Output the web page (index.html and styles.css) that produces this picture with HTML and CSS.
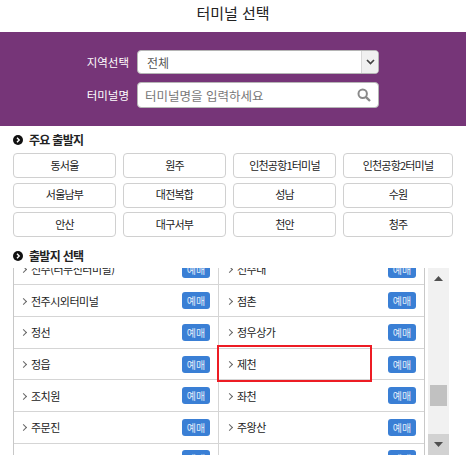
FILE: index.html
```html
<!DOCTYPE html>
<html lang="ko">
<head>
<meta charset="utf-8">
<title>터미널 선택</title>
<link rel="stylesheet" href="styles.css">
</head>
<body>
<h1 class="title">터미널 선택</h1>
<section class="panel">
  <div class="form-row">
    <label class="form-label">지역선택</label>
    <div class="field field-select">
      <span class="field-value">전체</span>
      <span class="select-arrow"><svg width="9" height="6" viewBox="0 0 9 6"><path d="M1 1l3.5 3.5L8 1" fill="none" stroke="#444" stroke-width="1.7"/></svg></span>
    </div>
  </div>
  <div class="form-row">
    <label class="form-label">터미널명</label>
    <div class="field field-input">
      <span class="placeholder">터미널명을 입력하세요</span>
      <svg class="search" width="14" height="14" viewBox="0 0 14 14"><circle cx="5.7" cy="5.7" r="4.2" fill="none" stroke="#8a8a8a" stroke-width="2"/><path d="M8.8 8.8L13 13" stroke="#8a8a8a" stroke-width="2.4"/></svg>
    </div>
  </div>
</section>
<h2 class="heading heading-first"><svg class="bullet" width="10" height="10" viewBox="0 0 10 10"><circle cx="5" cy="5" r="5" fill="#111"/><path d="M4 2.8L6.2 5 4 7.2" fill="none" stroke="#fff" stroke-width="1.4"/></svg>주요 출발지</h2>
<div class="chips">
  <button class="chip">동서울</button><button class="chip">원주</button><button class="chip">인천공항1터미널</button><button class="chip">인천공항2터미널</button>
  <button class="chip">서울남부</button><button class="chip">대전복합</button><button class="chip">성남</button><button class="chip">수원</button>
  <button class="chip">안산</button><button class="chip">대구서부</button><button class="chip">천안</button><button class="chip">청주</button>
</div>
<h2 class="heading heading-second"><svg class="bullet" width="10" height="10" viewBox="0 0 10 10"><circle cx="5" cy="5" r="5" fill="#111"/><path d="M4 2.8L6.2 5 4 7.2" fill="none" stroke="#fff" stroke-width="1.4"/></svg>출발지 선택</h2>
<div class="list-wrap">
  <div class="list">
    <div class="rows">
      <div class="cell"><span class="name">전주(터부신터미널)</span><span class="tag">예매</span></div>
      <div class="cell"><span class="name">전주대</span><span class="tag">예매</span></div>
      <div class="cell"><span class="name">전주시외터미널</span><span class="tag">예매</span></div>
      <div class="cell"><span class="name">점촌</span><span class="tag">예매</span></div>
      <div class="cell"><span class="name">정선</span><span class="tag">예매</span></div>
      <div class="cell"><span class="name">정우상가</span><span class="tag">예매</span></div>
      <div class="cell"><span class="name">정읍</span><span class="tag">예매</span></div>
      <div class="cell"><span class="name">제천</span><span class="tag">예매</span></div>
      <div class="cell"><span class="name">조치원</span><span class="tag">예매</span></div>
      <div class="cell"><span class="name">좌천</span><span class="tag">예매</span></div>
      <div class="cell"><span class="name">주문진</span><span class="tag">예매</span></div>
      <div class="cell"><span class="name">주왕산</span><span class="tag">예매</span></div>
      <div class="cell"><span class="name"></span><span class="tag">예매</span></div>
      <div class="cell"><span class="name"></span><span class="tag">예매</span></div>
    </div>
    <div class="highlight"></div>
  </div>
  <div class="scrollbar">
    <div class="sb-btn"><svg width="9" height="5" viewBox="0 0 9 5"><path d="M4.5 0L9 5H0z" fill="#505050"/></svg></div>
    <div class="sb-track"><div class="sb-thumb"></div></div>
    <div class="sb-btn sb-btn-down"><svg width="9" height="5" viewBox="0 0 9 5"><path d="M0 0h9L4.5 5z" fill="#505050"/></svg></div>
  </div>
</div>
</body>
</html>
```
FILE: styles.css
```css
* { box-sizing: border-box; }
html, body { margin: 0; padding: 0; }
body {
  width: 466px;
  height: 464px;
  overflow: hidden;
  background: #fff;
  color: #222;
  font-family: "Noto Sans CJK KR", "Noto Sans", sans-serif;
  font-size: 12px;
}
.title {
  margin: 0;
  height: 32px;
  line-height: 26px;
  text-align: center;
  font-size: 15px;
  font-weight: 400;
}
.panel {
  height: 94px;
  padding-top: 18px;
  background: #763578;
  display: flex;
  flex-direction: column;
  gap: 8px;
}
.form-row { display: flex; align-items: center; }
.form-label {
  width: 129px;
  text-align: right;
  margin-right: 8px;
  color: #fff;
  font-size: 11.5px;
  line-height: 18px;
}
.field {
  width: 242px;
  background: #fff;
  border: 1px solid #b5b5b5;
  border-radius: 4px;
  display: flex;
  align-items: center;
  overflow: hidden;
}
.field-select { height: 24px; }
.field-input { height: 26px; padding-right: 7px; }
.field-value { flex: 1; padding-left: 9px; color: #555; font-size: 12px; }
.placeholder { flex: 1; padding-left: 7px; color: #777; font-size: 12.5px; }
.select-arrow {
  width: 17px;
  height: 100%;
  background: #f0f0f0;
  border-left: 1px solid #d8d8d8;
  display: flex;
  align-items: center;
  justify-content: center;
}
.heading {
  margin: 0;
  padding-left: 13px;
  display: flex;
  align-items: center;
  gap: 6px;
  font-size: 12px;
  font-weight: 700;
  line-height: 16px;
  letter-spacing: -0.7px;
  color: #222;
}
.heading-first { height: 27px; padding-top: 1px; }
.heading-second { height: 31px; padding-top: 7px; }
.chips {
  margin-left: 13px;
  display: grid;
  grid-template-columns: 103px 103px 103px 110px;
  grid-auto-rows: 25px;
  column-gap: 7px;
  row-gap: 4.5px;
}
.chip {
  padding: 0 0 2px;
  background: #fff;
  border: 1px solid #d0d0d0;
  border-radius: 4px;
  color: #222;
  font: inherit;
  font-size: 11px;
  letter-spacing: -0.8px;
  line-height: 20px;
}
.list-wrap {
  margin-left: 13px;
  height: 187px;
  display: flex;
}
.list {
  position: relative;
  width: 412px;
  height: 187px;
  overflow: hidden;
  border-left: 1px solid #c8c8c8;
  border-right: 1px solid #c8c8c8;
}
.rows {
  margin-top: -14.3px;
  display: grid;
  grid-template-columns: 205px 205px;
  grid-auto-rows: 31.67px;
}
.cell {
  display: flex;
  align-items: center;
  justify-content: space-between;
  padding: 0 8px 0 17px;
  border-bottom: 1px solid #d5d5d5;
  position: relative;
}
.cell:nth-child(odd) { border-right: 1px solid #d5d5d5; }
.cell:nth-child(even) { padding-left: 18px; }
.cell::before {
  content: "";
  position: absolute;
  left: 7px;
  top: 50%;
  width: 4px;
  height: 4px;
  margin-top: -2px;
  border-top: 1.6px solid #666;
  border-right: 1.6px solid #666;
  transform: rotate(45deg);
}
.cell:nth-child(even)::before { left: 8px; }
.name { font-size: 11px; letter-spacing: -0.5px; color: #222; white-space: nowrap; }
.tag {
  flex: none;
  width: 28px;
  height: 17px;
  border-radius: 3px;
  background: #3a7fd5;
  color: #e4eefa;
  font-size: 10px;
  line-height: 17px;
  text-align: center;
}
.highlight {
  position: absolute;
  left: 203px;
  top: 77px;
  width: 155px;
  height: 37px;
  border: 2px solid #ed1c24;
}
.scrollbar {
  margin-left: 3px;
  width: 21px;
  height: 187px;
  background: #f1f1f1;
  display: flex;
  flex-direction: column;
}
.sb-btn {
  flex: none;
  height: 21px;
  display: flex;
  align-items: center;
  justify-content: center;
}
.sb-btn-down { background: #d2d2d2; }
.sb-track { flex: 1; padding: 96px 2px 0; }
.sb-thumb { height: 21px; background: #c1c1c1; }
```
